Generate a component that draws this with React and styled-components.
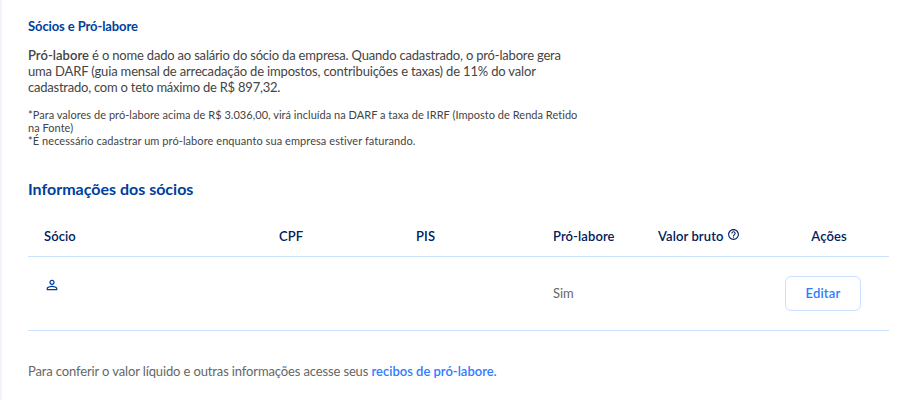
import React from "react";
import styled, { createGlobalStyle } from "styled-components";
import { MdHelpOutline, MdPersonOutline } from "react-icons/md";

const columns = ["Sócio", "CPF", "PIS", "Pró-labore", "Valor bruto", "Ações"];

const App = () => {
  return (
    <Page>
      <GlobalStyle />
      <Title>Sócios e Pró-labore</Title>
      <Description>
        <strong>Pró-labore</strong> é o nome dado ao salário do sócio da
        empresa. Quando cadastrado, o pró-labore gera
        <br />
        <Guide>
          uma DARF (guia mensal de arrecadação de impostos, contribuições e
          taxas) de 11% do valor
        </Guide>
        <br />
        <Ceiling>cadastrado, com o teto máximo de R$ 897,32.</Ceiling>
      </Description>
      <Notes>
        *Para valores de pró-labore acima de R$ 3.036,00, virá incluída na DARF
        a taxa de IRRF (Imposto de Renda Retido
        <br />
        na Fonte)
        <br />
        <Requirement>
          *É necessário cadastrar um pró-labore enquanto sua empresa estiver
          faturando.
        </Requirement>
      </Notes>
      <SectionTitle>Informações dos sócios</SectionTitle>
      <Table>
        <HeaderRow>
          {columns.map((column) => (
            <HeaderCell key={column}>
              {column}
              {column === "Valor bruto" && <MdHelpOutline size={13} />}
            </HeaderCell>
          ))}
        </HeaderRow>
        <PartnerRow>
          <PersonCell>
            <MdPersonOutline size={16} />
          </PersonCell>
          <Cell />
          <Cell />
          <Cell>Sim</Cell>
          <Cell />
          <EditButton type="button">Editar</EditButton>
        </PartnerRow>
      </Table>
      <Footer>
        Para conferir o valor líquido e outras informações acesse seus{" "}
        <ReceiptsLink href="#recibos">recibos de pró-labore.</ReceiptsLink>
      </Footer>
    </Page>
  );
};

const GlobalStyle = createGlobalStyle`
  * {
    box-sizing: border-box;
  }

  body {
    margin: 0;
    background: #ffffff;
    font-family: Lato, "Liberation Sans", sans-serif;
    font-variant-ligatures: none;
  }
`;

const Page = styled.main`
  height: 400px;
  padding: 18px 16px 0 26px;
  border-left: 2px solid #f2f3fa;
  overflow: hidden;
  white-space: nowrap;
`;

const Title = styled.h1`
  margin: 0;
  color: #00409c;
  font-size: 13px;
  font-weight: 700;
  line-height: 16px;
  letter-spacing: -0.1px;
`;

const Description = styled.p`
  margin: 13px 0 0;
  color: #444444;
  font-size: 13px;
  line-height: 16px;
  letter-spacing: -0.19px;

  strong {
    font-weight: 600;
    letter-spacing: 0.04px;
  }
`;

const Guide = styled.span`
  letter-spacing: -0.165px;
`;

const Ceiling = styled.span`
  letter-spacing: -0.23px;
`;

const Notes = styled.p`
  margin: 13px 0 0;
  color: #444444;
  font-size: 11px;
  line-height: 13px;
  letter-spacing: 0.035px;
`;

const Requirement = styled.span`
  letter-spacing: 0.07px;
`;

const SectionTitle = styled.h2`
  margin: 32px 0 0;
  color: #00409c;
  font-size: 16px;
  font-weight: 700;
  line-height: 20px;
`;

const Table = styled.section`
  margin-top: 17px;
`;

const Row = styled.div`
  display: grid;
  grid-template-columns: 235px 137px 137px 105px 127px 76px;
  padding-left: 16px;
  border-bottom: 1px solid #cce0ff;
`;

const HeaderRow = styled(Row)`
  height: 41px;
  align-items: center;
`;

const PartnerRow = styled(Row)`
  height: 74px;
  align-items: center;
`;

const HeaderCell = styled.div`
  display: flex;
  color: #00205f;
  font-size: 13px;
  font-weight: 600;
  line-height: 16px;
  letter-spacing: 0.1px;

  svg {
    margin: 0 0 0 4px;
  }

  &:last-child {
    justify-content: center;
    padding-left: 12px;
  }
`;

const Cell = styled.div`
  padding-bottom: 2px;
  color: #666666;
  font-size: 13px;
  line-height: 16px;
`;

const PersonCell = styled(Cell)`
  display: flex;
  align-self: start;
  padding-top: 20px;
  color: #00409c;
`;

const EditButton = styled.button`
  width: 76px;
  height: 35px;
  padding: 0 0 1px;
  border: 1px solid #cce0ff;
  border-radius: 6px;
  background: #ffffff;
  color: #2f7bff;
  font: 600 13px/16px Lato, sans-serif;
  letter-spacing: 0.15px;
`;

const Footer = styled.p`
  margin: 32px 0 0;
  color: #666666;
  font-size: 13px;
  line-height: 16px;
  letter-spacing: -0.13px;
`;

const ReceiptsLink = styled.a`
  color: #2f7bff;
  font-weight: 600;
  letter-spacing: 0;
  text-decoration: none;
`;

export default App;
